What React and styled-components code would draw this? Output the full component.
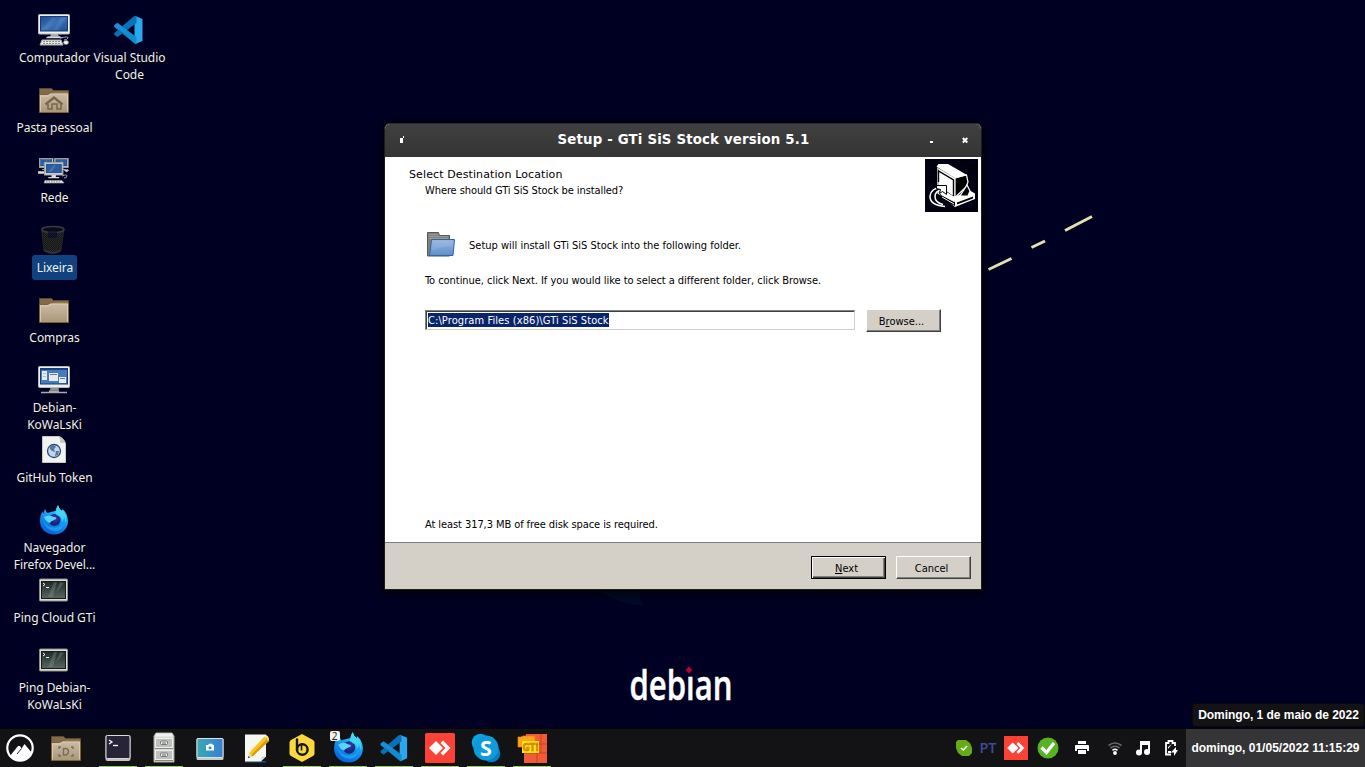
import React from 'react';
import styled, { createGlobalStyle, css } from 'styled-components';

const Global = createGlobalStyle`
  * { box-sizing: border-box; }
  html, body { margin: 0; padding: 0; overflow: hidden; background: #000022; }
  svg { display: block; flex: none; }
`;

const Screen = styled.div`
  position: relative;
  width: 1365px;
  height: 767px;
  background: #000022;
  display: flex;
  flex-direction: column;
  overflow: hidden;
`;

const Desktop = styled.main`
  flex: 1;
  min-height: 0;
  display: flex;
  padding: 14px 0 0 17px;
`;

const IconColumn = styled.div`
  display: flex;
  flex-direction: column;
  width: 75px;
`;

const Shortcut = styled.div`
  height: 70px;
  display: flex;
  flex-direction: column;
  align-items: center;
  flex: none;
  > svg { margin-right: 1px; }
`;

const ShortcutLabel = styled.span`
  margin-top: 3px;
  color: #f0f0f0;
  font: 12px/17px 'Noto Sans', sans-serif;
  letter-spacing: -0.05px;
  text-align: center;
  white-space: pre;
  text-shadow: 0 1px 1px #000;
  ${(p) => p.$selected && css`
    margin-top: -1px;
    padding: 4px 4px 4px 5px;
    background: #11427f;
    border-radius: 3px;
    text-shadow: none;
  `}
`;

const Wallpaper = styled.svg`
  position: absolute;
  left: 0;
  top: 0;
  pointer-events: none;
`;

/* ---------- installer window ---------- */

const Window = styled.section`
  position: absolute;
  left: 384px;
  top: 123px;
  width: 598px;
  height: 467px;
  display: flex;
  flex-direction: column;
  border: 1px solid #1c1c1c;
  border-top-color: #2b2b2b;
  border-radius: 6px 6px 0 0;
  background: #fff;
  box-shadow: 0 2px 9px 2px rgba(0, 0, 0, 0.75);
  color: #000;
  font: 11px/14px 'DejaVu Sans Condensed', 'DejaVu Sans', sans-serif;
`;

const TitleBar = styled.header`
  height: 33px;
  flex: none;
  display: flex;
  align-items: center;
  padding: 0 13px 2px 14px;
  border-radius: 5px 5px 0 0;
  background: linear-gradient(#404040, #343434);
`;

const Title = styled.h1`
  flex: 1;
  margin: 0 0 0 33px;
  color: #fff;
  font: bold 13.33px/18px 'DejaVu Sans', sans-serif;
  letter-spacing: 0.16px;
  text-align: center;
`;

const TitleActions = styled.div`
  display: flex;
  gap: 28px;
`;

const WizardBody = styled.div`
  flex: 1;
  display: flex;
  flex-direction: column;
  border-bottom: 1px solid #808080;
`;

const WizardHeader = styled.div`
  display: flex;
  justify-content: space-between;
  height: 58px;
  padding: 2px 3px 0 24px;
`;

const HeaderTexts = styled.div`
  padding-top: 8px;
`;

const Line = styled.p`
  margin: 0;
  height: 14px;
  line-height: 16px;
  white-space: nowrap;
  letter-spacing: ${(p) => p.$spacing || 0}px;
`;

const Heading = styled(Line)`
  font-family: 'DejaVu Sans', sans-serif;
`;

const SubHeading = styled(Line)`
  margin: 2px 0 0 16px;
`;

const Content = styled.div`
  flex: 1;
  display: flex;
  flex-direction: column;
  padding: 16px 40px 11px;
`;

const FolderRow = styled.div`
  display: flex;
  align-items: center;
  gap: 12px;
  height: 28px;
  margin-bottom: 14px;
`;

const PathRow = styled.div`
  display: flex;
  align-items: flex-start;
  gap: 11px;
  margin-top: 22px;
  flex: 1;
`;

const PathField = styled.div`
  width: 430px;
  flex: none;
  height: 20px;
  margin-top: 1px;
  padding: 1px 0 0 1px;
  border: 1px solid;
  border-color: #808080 #d4d0c8 #d4d0c8 #808080;
  box-shadow: inset 1px 1px #404040;
`;

const SelectedText = styled.span`
  display: inline-block;
  height: 14px;
  margin: 1px 0 0 1px;
  background: #0a246a;
  color: #fff;
  line-height: 15.500px;
  letter-spacing: 0.09px;
  white-space: nowrap;
`;

const WinButton = styled.button`
  width: 75px;
  height: 23px;
  flex: none;
  padding: 2px 4px 0 0;
  border: 1px solid;
  border-color: #fff #404040 #404040 #fff;
  box-shadow: inset -1px -1px #808080;
  background: #d4d0c8;
  color: #000;
  font: inherit;
  ${(p) => p.$primary && css`
    border-color: #000;
    box-shadow: inset 1px 1px #fff, inset -1px -1px #404040, inset -2px -2px #808080;
  `}
  u { text-decoration-thickness: 1px; text-underline-offset: 1px; }
`;

const WizardFooter = styled.footer`
  height: 46px;
  flex: none;
  display: flex;
  justify-content: flex-end;
  gap: 10px;
  padding: 13px 10px 0 0;
  background: #d4d0c8;
`;

/* ---------- panel ---------- */

const Panel = styled.nav`
  position: relative;
  height: 39px;
  flex: none;
  display: flex;
  border-top: 1px solid #050505;
  background: #131315;
`;

const Launcher = styled.div`
  width: ${(p) => p.$width || 38}px;
  flex: none;
  display: flex;
  align-items: center;
  justify-content: center;
  border-bottom: 1px solid ${(p) => (p.$running ? '#9ac66d' : 'transparent')};
`;

const Tasks = styled.div`
  flex: 1;
  display: flex;
  gap: 8px;
  margin-left: 7px;
`;

const Badged = styled.div`
  position: relative;
`;

const CountBadge = styled.span`
  position: absolute;
  left: -2px;
  top: 0;
  width: 10px;
  height: 10px;
  border-radius: 2px;
  background: #f2f2f2;
  color: #222;
  font: 10px/10px 'Noto Sans', sans-serif;
  text-align: center;
`;

const Tray = styled.div`
  display: flex;
  align-items: center;
`;

const TrayItem = styled.div`
  width: ${(p) => p.$width}px;
  display: flex;
  justify-content: center;
`;

const Language = styled.span`
  color: #3f4a9c;
  font: 600 14.5px/18px 'Open Sans', sans-serif;
`;

const Clock = styled.div`
  width: 179px;
  display: flex;
  align-items: center;
  justify-content: center;
  background: #353537;
  color: #fff;
  font: bold 12px/16px 'Liberation Sans', sans-serif;
  white-space: nowrap;
`;

const DateTip = styled.div`
  position: absolute;
  right: 0;
  top: -26px;
  width: 173px;
  height: 24px;
  border: 1px solid #08080a;
  border-radius: 3px;
  background: #131315;
  color: #fff;
  font: bold 12px/22px 'Liberation Sans', sans-serif;
  letter-spacing: -0.03px;
  text-align: center;
  white-space: nowrap;
`;

/* ---------- desktop drawings ---------- */

const ComputerIcon = () => (
  <svg width="32" height="32" viewBox="0 0 32 32">
    <defs>
      <linearGradient id="scr" x2="1" y2="1"><stop stopColor="#1c4a8c" /><stop offset=".5" stopColor="#3f72b8" /><stop offset="1" stopColor="#1e4c90" /></linearGradient>
    </defs>
    <path d="M13 20h7l1 3h-9z" fill="#a9aba5" />
    <rect x=".5" y=".5" width="31" height="19.500" rx="1" fill="#eeeeea" stroke="#b8bab4" />
    <rect x="2.500" y="2.500" width="27" height="14.500" fill="url(#scr)" stroke="#153c78" />
    <path d="M4 15 14 4h4L9 16zM15 16l8-12h5L20 16z" fill="#7aa3d8" opacity=".2" />
    <path d="M10 22.500h12l2 1.500H8z" fill="#f4f4f0" stroke="#999" strokeWidth=".5" />
    <path d="M22 24q9-2 8 0t-4 2" fill="none" stroke="#aaa" />
    <path d="M4 26h19l2 5H2z" fill="#e8e8e2" stroke="#aaa" />
    <path d="M5 27.500h17M5 29.500h18" stroke="#8b8c87" strokeDasharray="2 1" />
    <ellipse cx="28" cy="28.500" rx="2.500" ry="2" fill="#f1f1ed" stroke="#999" strokeWidth=".6" />
  </svg>
);

const MiniMonitor = ({ x, y }) => (
  <g transform={`translate(${x} ${y})`}>
    <rect x=".5" y=".5" width="17" height="11.500" fill="#eeeeea" stroke="#9fa19b" />
    <rect x="2" y="2" width="14" height="8" fill="#2a5da3" stroke="#153c78" strokeWidth=".7" />
    <path d="m4 9 5-6h2L7 9z" fill="#86add8" opacity=".3" />
    <path d="M7 12h4v2h3v1H4v-1h3z" fill="#ddd" />
  </g>
);

const NetworkIcon = () => (
  <svg width="32" height="32" viewBox="0 0 32 32">
    <g transform="translate(1 4) scale(.8)"><MiniMonitor x="0" y="0" /><MiniMonitor x="19" y="0" /></g>
    <path d="M0 17.500h7l-1 2H0zM26 16q6-1 4 1l-2 1" fill="#ddd" stroke="#aaa" />
    <g transform="translate(6 8) scale(1.080)"><MiniMonitor x="0" y="0" /></g>
    <path d="M24 22q5-2 5 0t-3 2" fill="none" stroke="#aaa" />
    <path d="M7 26.500h17l2 2.500H6z" fill="#eee" stroke="#999" strokeWidth=".7" />
    <path d="M8 27.800h15" stroke="#888" strokeDasharray="1.500 1" />
  </svg>
);

const FolderIcon = ({ emblem }) => (
  <svg width="32" height="32" viewBox="0 0 32 32">
    <defs><linearGradient id="fold" x2="0" y2="1"><stop stopColor="#cbbda6" /><stop offset="1" stopColor="#a89779" /></linearGradient></defs>
    <path d="M1.500 14V4.500h12l2 2h15V14z" fill="#806b4c" stroke="#5e4a2d" />
    <path d="M15 8.500h15" stroke="#a48f70" />
    <path d="M1.500 28.500V11.500q0-1 1-1h7l3-1.500h17q1 0 1 1v18.500z" fill="url(#fold)" stroke="#80602f" />
    <path d="M2.500 27.500V12h8l2.500-2h16.500v17.500" fill="none" stroke="#ded3c2" strokeWidth=".8" />
    {emblem === 'home' && (
      <g fill="none" stroke="#78664b" strokeWidth="2"><path d="m7.500 20.500 8.500-7 8.500 7" strokeWidth="2.300" /><path d="M10 20v5h4v-5h5v5h4v-5" strokeWidth="1.500" /></g>
    )}
    {emblem === 'desktop' && (
      <g fill="none" stroke="#7d6c53" strokeWidth="1.400"><path d="M9 17v-2h2M21 15h2v2M9 22v2h2M21 24h2v-2M13.500 16.500h2.500q2.500.5 2.500 3t-2.500 3.500h-2.500z" /></g>
    )}
  </svg>
);

const TrashIcon = () => (
  <svg width="32" height="32" viewBox="0 0 32 32">
    <defs>
      <pattern id="mesh" width="2" height="2" patternUnits="userSpaceOnUse"><rect width="2" height="2" fill="#161717" /><rect width="1" height="1" fill="#2a2b2c" /><rect x="1" y="1" width="1" height="1" fill="#252626" /></pattern>
    </defs>
    <path d="M3.500 4.500 6 27q9 5 17 0l3-22.500z" fill="url(#mesh)" stroke="#222322" />
    <ellipse cx="15" cy="5.500" rx="11" ry="3" fill="#0a0a1c" stroke="#3a3b3a" strokeWidth="1.500" />
    <path d="M10 8h9v6h-9z" fill="#070735" opacity=".6" />
    <path d="M6.500 26.500q8.500 4.500 16 0" fill="none" stroke="#343535" strokeWidth="1.500" />
  </svg>
);

const RemoteIcon = () => (
  <svg width="32" height="32" viewBox="0 0 32 32">
    <path d="M13 22h7l1 4h-9z" fill="#8f918c" />
    <rect x=".5" y="2.500" width="31" height="21" rx="1" fill="#eeeeea" stroke="#b8bab4" />
    <rect x="2.500" y="4.500" width="27" height="15.500" fill="#447bc0" stroke="#153c78" />
    <path d="M3 5.500h26" stroke="#1c4380" />
    <path d="M4 7h5v9H4zM11 9h9v8h-9zM21 13h7v6h-7z" fill="#e8eae8" />
    <path d="M5 9.500h3M5 12.500h3" stroke="#b3bbc2" /><path d="M12 10.500h7M22 14.500h5" stroke="#68798f" />
    <path d="M3 28.500h26M11 27h10" stroke="#aaaba5" strokeWidth="1.300" />
  </svg>
);

const WebFileIcon = () => (
  <svg width="32" height="32" viewBox="0 0 32 32">
    <path d="M4.500 2.500h16q3 0 7 7v19h-23z" fill="#f2f2f0" stroke="#c7c7c4" />
    <path d="M20 2q3 3 2 7 4-1 6 1-2-7-8-8z" fill="#c5c5c2" />
    <circle cx="16" cy="17" r="6.500" fill="#c4d6ea" stroke="#274e80" strokeWidth="1.300" />
    <path d="m12 12 4-1 2 2-2 2 1 3-3-1-2-2zm6 5 3 0-1 4-3 1z" fill="#58779a" />
  </svg>
);

const FirefoxIcon = ({ size = 32, id = 'ff' }) => (
  <svg width={size} height={size} viewBox="0 0 32 32">
    <defs>
      <linearGradient id={id} x1=".75" y1="0" x2=".3" y2="1"><stop stopColor="#45e5f0" /><stop offset=".45" stopColor="#159cf5" /><stop offset="1" stopColor="#075ed4" /></linearGradient>
      <radialGradient id={`${id}b`} cx=".55" cy=".35"><stop stopColor="#4135b8" /><stop offset="1" stopColor="#172675" /></radialGradient>
    </defs>
    <path d="M20 1q1 4 4 6l.5-2q5 4 5.500 12c0 8-6 13.500-14 13.500S2 25 2 17q0-6 2.500-10L5 10l2-5 2 4 4-1q3-1 5-1 0-3 2-6z" fill={`url(#${id})`} />
    <circle cx="16.500" cy="16" r="6" fill={`url(#${id}b)`} />
    <path d="M6 13q5-3 10 0 3 0 2 2l-4 2q-2 1-2 2-4-1-6-6z" fill="#57d4f9" />
    <path d="M5 16q5 10 16 7 4-1 5-6-1 10-9 10-9 0-12-11z" fill="#27acfa" opacity=".65" />
    <path d="M20 2q0 5 5 9 3 4 2 9 3-8-2-13-4-1-5-5zM17.500 8q-1 3 5 5 2 2 1 5 5-4 0-10z" fill="#50e3f5" opacity=".65" />
    <path d="m20 1-3 7 5 4 2-5q-3-2-4-6z" fill="#3edcf6" opacity=".8" />
  </svg>
);

const PingIcon = () => (
  <svg width="32" height="32" viewBox="0 0 32 32">
    <defs><linearGradient id="ping" x2="0" y2="1"><stop stopColor="#202a28" /><stop offset="1" stopColor="#586661" /></linearGradient></defs>
    <rect x="1.500" y="5" width="28" height="22" rx="1" fill="#deded9" stroke="#8b8c87" />
    <rect x="3.500" y="7.500" width="24" height="17" fill="url(#ping)" stroke="#171c1a" />
    <path d="m16 8-6 15h5l4-15zM22 8l-4 11 8-10z" fill="#8ca098" opacity=".32" />
    <path d="m5 9 2 1.500L5 12M8 13.500h3" fill="none" stroke="#f0f4f1" />
  </svg>
);

const CodeIcon = ({ size = 32, shift = 0 }) => (
  <svg width={size} height={size} viewBox={`${shift} 0 32 32`}>
    <path d="m23 2 7 3v22l-7 3-1-1V3z" fill="#2ba7ee" />
    <path d="m2 11 3-2 19 14v7l-2-.5L2 13q-1-1 0-2z" fill="#128bd0" />
    <path d="M2 19 21 2.500 24 2v7L5 23l-3-2q-1-1 0-2z" fill="#0871b9" />
    <path d="m2 11 3-2 10 7.500-3 3L2 13z" fill="#168fd5" />
  </svg>
);

/* ---------- panel drawings ---------- */

const CinnamonIcon = () => (
  <svg width="28" height="28" viewBox="0 0 28 28">
    <circle cx="14" cy="14" r="12.700" fill="none" stroke="#fff" strokeWidth="2.200" />
    <path d="M4 22 12 12h2l1.500 2.500L18.500 10l7.500 9-3 4.500-5 3h-8z" fill="#fff" />
    <path d="m15.500 14.500-4.500 5.500" stroke="#131315" strokeWidth=".9" />
  </svg>
);

const TerminalIcon = () => (
  <svg width="28" height="28" viewBox="0 0 28 28">
    <rect x="1.500" y="1" width="25" height="26" rx="2" fill="#c5c4c2" />
    <rect x="2" y="1.500" width="24" height="23" rx="1.500" fill="#272438" stroke="#dad9d6" />
    <path d="m5 6 3 2-3 2" fill="none" stroke="#fff" strokeWidth="1.300" /><path d="M9 11.500h5" stroke="#fff" strokeWidth="1.300" />
  </svg>
);

const CabinetIcon = () => (
  <svg width="24" height="32" viewBox="0 0 24 32">
    <path d="M4 1h16l2 3v26H2V4z" fill="#d9dad7" stroke="#aaaba7" />
    <path d="M4 1.500h16l1 3H3z" fill="#f1f1ee" />
    <rect x="3.500" y="6.500" width="17" height="9" fill="#bdc0bb" stroke="#eceeea" /><rect x="3.500" y="18.500" width="17" height="9" fill="#bdc0bb" stroke="#eceeea" />
    <path d="M3 16.500h18M3 28.500h18" stroke="#858782" />
    <g fill="#eee" stroke="#777"><rect x="8.500" y="9" width="7" height="3.500" rx="1" /><rect x="8.500" y="21" width="7" height="3.500" rx="1" /></g><path d="M10 11h4M10 23h4" stroke="#666" />
  </svg>
);

const ScreenshotIcon = () => (
  <svg width="28" height="24" viewBox="0 0 28 24">
    <defs><linearGradient id="shot" x2="1"><stop stopColor="#3aa9b3" /><stop offset="1" stopColor="#3580d4" /></linearGradient></defs>
    <g transform="translate(0 1)">
      <rect x=".5" y="1" width="27" height="22" rx="1.500" fill="#c8c8c5" /><rect x="1" y="1.500" width="26" height="19" rx="1" fill="url(#shot)" stroke="#e1e1df" />
      <path d="M10 8h2l1-1.200h3L17 8h1v5.500h-8z" fill="#fff" /><circle cx="14" cy="10.700" r="1.500" fill="#338fc0" />
    </g>
  </svg>
);

const NotesIcon = () => (
  <svg width="26" height="30" viewBox="-1 0 26 30">
    <path d="M1 28h21v1.500H1z" fill="#164b8c" /><path d="M1 1.500h21v22l-5 5H1z" fill="#f6f6f2" /><path d="m17 28 5-5-4 1z" fill="#d0d0cc" />
    <path d="m5 20 3.500 3.500L25 8l-4.500-4.500z" fill="#f8c51b" /><path d="M7 22 23 6l2 2L8.500 23.500z" fill="#dc9b0d" /><path d="m5 20-1 5 4.500-1.500z" fill="#ead9ad" /><path d="m4.500 23-.5 2 2-.5z" fill="#222" /><path d="m21 3 1-1q3 1 3 5l-1 1z" fill="#ffe47e" />
  </svg>
);

const BeekeeperIcon = () => (
  <svg width="28" height="30" viewBox="0 0 28 30">
    <path d="m14 1 11 6q1.500 1 1.500 2.500v11q0 1.500-1.500 2.500l-11 6-11-6Q1.500 22 1.500 20.500v-11Q1.500 8 3 7z" fill="#fbd83d" />
    <path d="M9 6.500V17" stroke="#171717" strokeWidth="2.400" strokeLinecap="round" /><circle cx="14.300" cy="16.500" r="5.300" fill="none" stroke="#171717" strokeWidth="2.400" /><path d="M13.500 10.500v7" stroke="#171717" strokeWidth="1.600" />
  </svg>
);

const AnyDeskIcon = ({ size = 30 }) => (
  <svg width={size} height={size} viewBox="0 0 30 30">
    <rect width="30" height="30" rx={size > 25 ? 1.5 : 0} fill="#fc4237" />
    <path d="m4 15 7-7 7 7-7 7z" fill="#fff" /><path d="m15.500 10 2.500-2.500 7.500 7.500-7.500 7.500-2.500-2.500 5-5z" fill="#fff" />
  </svg>
);

const SkypeIcon = () => (
  <svg width="30" height="30" viewBox="0 0 30 30">
    <circle cx="9.500" cy="9.500" r="8.800" fill="#0ba3e2" /><circle cx="20.500" cy="20.500" r="8.800" fill="#087dc5" /><circle cx="15" cy="15" r="12.500" fill="#0d9bdc" />
    <text x="15" y="22.500" textAnchor="middle" fill="#fff" fontFamily="Open Sans, sans-serif" fontWeight="700" fontSize="21.500">S</text>
  </svg>
);

const GtiIcon = () => (
  <svg width="30" height="30" viewBox="0 0 30 30">
    <path d="M9 1h21v29H7V12z" fill="#f15b38" /><path d="M7 20h23M21 11h9M24 1v19M20 20v10" stroke="#c83a24" strokeWidth=".8" />
    <path d="M1 4h3l2-1h12v11H1z" fill="#f9a51d" stroke="#f07618" strokeWidth=".7" /><path d="M5 8h17v12H5z" fill="#ffe90b" />
    <text x="5.500" y="18" textLength="16" lengthAdjust="spacingAndGlyphs" fill="#ef8d12" stroke="#b8651c" strokeWidth=".4" fontFamily="DejaVu Sans, sans-serif" fontWeight="700" fontSize="10.500">GTi</text>
  </svg>
);

const StatusIcon = () => (
  <svg width="16" height="16" viewBox="0 0 16 16"><path d="M2 0h8l4 3 2 5v5l-3 3H6l-4-3-2-5V2z" fill="#66ab16" /><path d="m5 8 2.300 2L11 6" fill="none" stroke="#fff" strokeWidth="1.600" /></svg>
);
const CheckIcon = () => (
  <svg width="22" height="22" viewBox="0 0 22 22"><circle cx="11" cy="11" r="10.500" fill="#57b324" /><path d="m4.500 10.500 5 5L17 6" fill="none" stroke="#fff" strokeWidth="3.200" /></svg>
);
const PrinterIcon = () => (
  <svg width="14" height="14" viewBox="0 0 14 14" fill="#fff"><path d="M3 0h8v3H3zM1 4h12q1 0 1 1v5h-2V8H2v2H0V5q0-1 1-1zM3 9h8v4H3z" /></svg>
);
const WifiIcon = () => (
  <svg width="14" height="14" viewBox="0 0 14 14" fill="none"><path d="M.5 4.500q6.500-5 13 0M2.500 7q4.500-3.500 9 0" stroke="#67676a" strokeWidth="1.600" /><path d="M4.500 9.300q2.500-2 5 0" stroke="#fff" strokeWidth="1.600" /><circle cx="7" cy="12" r="1.900" fill="#fff" /></svg>
);
const MusicIcon = () => (
  <svg width="16" height="16" viewBox="0 0 16 16" fill="#fff"><path d="M5 1h10v11h-2V5H7v8H5z" /><circle cx="4" cy="12.500" r="3" /><circle cx="12" cy="12" r="3" /></svg>
);
const BatteryIcon = () => (
  <svg width="16" height="18" viewBox="0 0 16 18" fill="#fff"><path d="M8 15.500H3V4h2.500V2h4v2H12v3" fill="none" stroke="#fff" strokeWidth="1.800" /><path d="M9 5 5 8v2zM5 12h3v2H5z" /><path d="M15 11h-2V8l-5 5.500h3V17z" /></svg>
);

const SetupArt = () => (
  <svg width="53" height="53" viewBox="0 0 53 53">
    <defs><pattern id="dots" width="2" height="2" patternUnits="userSpaceOnUse"><rect width="2" height="2" fill="#000" /><rect width="1" height="1" fill="#00003e" /></pattern></defs>
    <rect width="53" height="53" fill="url(#dots)" />
    <path d="m12 34 6-3 12 7 14-7 6 3.500V40L30 48z" fill="#fff" />
    <path d="m14 34.500 16 8.500v4l-12-6zM32 43.500l16-6v2l-16 6z" fill="#000" />
    <path d="m16 35.500 13 7M17 38l12 7" fill="none" stroke="#fff" strokeWidth="1" />
    <path d="M30 19v19.500l11-10.500 2-5-1.500-7z" fill="#000" stroke="#fff" strokeWidth="1.200" />
    <path d="M11.500 7.500 13.500 5H23l19 11-12 3.500z" fill="#fff" />
    <path d="M12 8v18l18 12V19z" fill="#bbb" /><path d="M14 10v16l16 12V19.500z" fill="#fff" />
    <path d="M13.500 23V12l15 9v16" fill="none" stroke="#000" strokeWidth="1.400" />
    <path d="m42 26-7 11h8l2-5z" fill="#000" stroke="#fff" strokeWidth="1.200" />
    <path d="M17 28Q6 29 5 37q-.5 9 15 10.500M17 31q-7 1-7 6.500 0 6 8 8" fill="none" stroke="#fff" strokeWidth="1.500" />
    <path d="M11.500 26.500h10v9l-4-3-3 2 1-4-4-1z" fill="#fff" stroke="#000" />
  </svg>
);

const BlueFolder = () => (
  <svg width="32" height="28" viewBox="0 0 32 28">
    <defs><linearGradient id="blu" x2="0" y2="1"><stop stopColor="#8fb3e0" /><stop offset="1" stopColor="#628fcb" /></linearGradient></defs>
    <path d="M2.500 25V1.500h11l1 3h10V25z" fill="#7f817d" stroke="#565854" /><path d="M4 3.500h9M4 5.500h19M4 7.500h19" stroke="#9fa19c" strokeWidth=".8" />
    <path d="M6.500 8.500h23l-1.500 16H4.500z" fill="url(#blu)" stroke="#34639f" /><path d="M7.500 9.500h21l-1 6q-12 0-19 4H6.500z" fill="#fff" opacity=".1" />
  </svg>
);

const leftShortcuts = [
  ['Computador', <ComputerIcon />],
  ['Pasta pessoal', <FolderIcon emblem="home" />],
  ['Rede', <NetworkIcon />],
  ['Lixeira', <TrashIcon />, true],
  ['Compras', <FolderIcon />],
  ['Debian-\nKoWaLsKi', <RemoteIcon />],
  ['GitHub Token', <WebFileIcon />],
  ['Navegador\nFirefox Devel...', <FirefoxIcon />],
  ['Ping Cloud GTi', <PingIcon />],
  ['Ping Debian-\nKoWaLsKi', <PingIcon />],
];

const tasks = [
  [<TerminalIcon />, true], [<CabinetIcon />, true], [<ScreenshotIcon />, false], [<NotesIcon />, false], [<BeekeeperIcon />, true],
  [<Badged><FirefoxIcon size={33} id="ffp" /><CountBadge>2</CountBadge></Badged>, true],
  [<CodeIcon size={30} />, true], [<AnyDeskIcon />, true], [<SkypeIcon />, true], [<GtiIcon />, true],
];

export default function App() {
  return (
    <Screen>
      <Global />
      <Wallpaper width="1365" height="728">
        <path d="m988.500 269.500 23-11M1031.500 247.500l13.500-6.500M1065 230.500l27-14" stroke="#e4e0b4" strokeWidth="3" fill="none" />
        <path d="M600 590h38l5 16q-22-2-43-14z" fill="#00102c" opacity=".6" />
        <text x="629.500" y="700" textLength="103" lengthAdjust="spacingAndGlyphs" fill="#fff" stroke="#fff" strokeWidth=".5" fontFamily="Open Sans, sans-serif" fontWeight="600" fontSize="41">debian</text>
        <path d="M684 664h10v11h-10z" fill="#000022" />
        <path d="m689 666.500 3.500 3.500-3.500 3.500-3.500-3.500z" fill="#b5042f" />
      </Wallpaper>
      <Desktop>
        <IconColumn>
          {leftShortcuts.map(([label, icon, selected]) => (
            <Shortcut key={label}>{icon}<ShortcutLabel $selected={selected}>{label}</ShortcutLabel></Shortcut>
          ))}
        </IconColumn>
        <IconColumn>
          <Shortcut><CodeIcon shift={0.5} /><ShortcutLabel>{'Visual Studio\nCode'}</ShortcutLabel></Shortcut>
        </IconColumn>
      </Desktop>

      <Window>
        <TitleBar>
          <svg width="6" height="8" viewBox="0 0 6 8"><path d="M1 2h3v5H1zM4 0h1v2H4z" fill="#fff" /></svg>
          <Title>Setup - GTi SiS Stock version 5.1</Title>
          <TitleActions>
            <svg width="5" height="8" viewBox="0 0 5 8"><path d="M1 5h3v2H1z" fill="#fff" /></svg>
            <svg width="6" height="8" viewBox="0 0 6 8"><path d="m.8 2 4.500 4.500M5.300 2 .8 6.500" stroke="#fff" strokeWidth="2" /></svg>
          </TitleActions>
        </TitleBar>
        <WizardBody>
          <WizardHeader>
            <HeaderTexts>
              <Heading $spacing={0.11}>Select Destination Location</Heading>
              <SubHeading $spacing={-0.09}>Where should GTi SiS Stock be installed?</SubHeading>
            </HeaderTexts>
            <SetupArt />
          </WizardHeader>
          <Content>
            <FolderRow><BlueFolder /><Line>Setup will install GTi SiS Stock into the following folder.</Line></FolderRow>
            <Line $spacing={-0.05}>To continue, click Next. If you would like to select a different folder, click Browse.</Line>
            <PathRow>
              <PathField><SelectedText>C:\Program Files (x86)\GTi SiS Stock</SelectedText></PathField>
              <WinButton>B<u>r</u>owse...</WinButton>
            </PathRow>
            <Line $spacing={-0.08}>At least 317,3 MB of free disk space is required.</Line>
          </Content>
        </WizardBody>
        <WizardFooter>
          <WinButton $primary><u>N</u>ext</WinButton>
          <WinButton>Cancel</WinButton>
        </WizardFooter>
      </Window>

      <Panel>
        <Launcher $width={40}><CinnamonIcon /></Launcher>
        <Launcher $width={52}><FolderIcon emblem="desktop" /></Launcher>
        <Tasks>
          {tasks.map(([icon, running], i) => <Launcher key={i} $running={running}>{icon}</Launcher>)}
        </Tasks>
        <Tray>
          <TrayItem $width={24}><StatusIcon /></TrayItem>
          <TrayItem $width={24}><Language>PT</Language></TrayItem>
          <TrayItem $width={32}><AnyDeskIcon size={24} /></TrayItem>
          <TrayItem $width={32}><CheckIcon /></TrayItem>
          <TrayItem $width={36}><PrinterIcon /></TrayItem>
          <TrayItem $width={30}><WifiIcon /></TrayItem>
          <TrayItem $width={26}><MusicIcon /></TrayItem>
          <TrayItem $width={30}><BatteryIcon /></TrayItem>
        </Tray>
        <Clock>domingo, 01/05/2022 11:15:29</Clock>
        <DateTip>Domingo, 1 de maio de 2022</DateTip>
      </Panel>
    </Screen>
  );
}
